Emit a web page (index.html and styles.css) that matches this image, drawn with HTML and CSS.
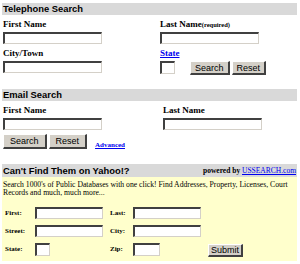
FILE: index.html
```html
<!DOCTYPE html>
<html lang="en">
<head>
    <meta charset="UTF-8">
    <title>People Search</title>
    <link rel="stylesheet" href="styles.css">
</head>
<body>

<div class="page">
    <div class="bar">Telephone Search</div>
    <div class="grid tel">
        <div class="field">
            <label>First Name</label>
            <input type="text" class="txt">
        </div>
        <div class="field">
            <label>Last Name<small>(required)</small></label>
            <input type="text" class="txt">
        </div>
        <div class="field">
            <label>City/Town</label>
            <input type="text" class="txt">
        </div>
        <div class="field">
            <a href="#" class="state">State</a>
            <div class="row">
                <input type="text" class="txt st">
                <button class="btn">Search</button>
                <button class="btn">Reset</button>
            </div>
        </div>
    </div>

    <div class="bar">Email Search</div>
    <div class="grid mail">
        <div class="field">
            <label>First Name</label>
            <input type="text" class="txt">
        </div>
        <div class="field">
            <label>Last Name</label>
            <input type="text" class="txt">
        </div>
    </div>
    <div class="row mail-btns">
        <button class="btn big">Search</button>
        <button class="btn big">Reset</button>
        <a href="#" class="adv">Advanced</a>
    </div>

    <div class="bar big-bar">
        <span>Can't Find Them on Yahoo!?</span>
        <span class="powered">powered by <a href="#">USSEARCH.com</a></span>
    </div>
    <div class="yellow">
        <p class="desc">Search 1000's of Public Databases with one click! Find Addresses, Property, Licenses, Court Records and much, much more...</p>
        <div class="us-form">
            <label>First:</label>
            <input type="text" class="txt w68">
            <label>Last:</label>
            <input type="text" class="txt w68">
            <span></span>

            <label>Street:</label>
            <input type="text" class="txt w68">
            <label>City:</label>
            <input type="text" class="txt w68">
            <span></span>

            <label>State:</label>
            <input type="text" class="txt w14">
            <label>Zip:</label>
            <input type="text" class="txt w26">
            <button class="btn sub">Submit</button>
        </div>
    </div>
</div>

</body>
</html>
```

FILE: styles.css
```css
body {
    margin: 0;
    font-family: "Liberation Serif", "Times New Roman", serif;
    background: #fff;
    color: #000;
}
.page {
    width: 295px;
    margin: 3px 0 0 2px;
}
.bar {
    height: 12px;
    line-height: 12px;
    background-color: #d9d9d9;
    font-family: "Liberation Sans", Arial, sans-serif;
    font-weight: bold;
    font-size: 9.4px;
    padding-left: 1px;
}
.grid {
    display: grid;
    grid-template-columns: 157px 1fr;
    padding-left: 1px;
}
.tel {
    padding-top: 4px;
    row-gap: 4px;
    margin-bottom: 14px;
}
.mail {
    padding-top: 4px;
    grid-template-columns: 160px 1fr;
}
.field label,
.field .state {
    display: block;
    font-weight: bold;
    font-size: 9px;
    line-height: 11px;
    margin-bottom: 2px;
}
.field label small {
    font-size: 6.5px;
}
.state {
    color: #0000ee;
}
.txt {
    display: block;
    box-sizing: border-box;
    width: 99px;
    height: 12px;
    padding: 0;
    margin: 0;
    background: #fff;
    border-style: solid;
    border-width: 2px 1px 1px 2px;
    border-color: #404040 #d4d0c8 #d4d0c8 #404040;
}
.row {
    display: flex;
    align-items: flex-start;
}
.st {
    width: 15px;
    height: 13px;
    margin-right: 15px;
}
.btn {
    box-sizing: border-box;
    height: 14px;
    padding: 0 4px;
    margin: 0 2px 0 0;
    background-color: #d4d0c8;
    border-style: solid;
    border-width: 1px 2px 2px 1px;
    border-color: #ffffff #404040 #404040 #ffffff;
    font-family: "Liberation Sans", Arial, sans-serif;
    font-size: 9px;
    color: #000;
}
.mail-btns {
    padding: 4px 0 0 1px;
    margin-bottom: 15px;
    align-items: center;
}
.btn.big {
    height: 15px;
    padding: 0 6px;
}
.adv {
    margin: 7px 0 0 6px;
    font-size: 7px;
    font-weight: bold;
    color: #0000ee;
}
.big-bar {
    height: 13px;
    line-height: 13px;
    display: flex;
    justify-content: space-between;
}
.powered {
    font-family: "Liberation Serif", "Times New Roman", serif;
    font-size: 7.5px;
    padding-right: 1px;
}
.powered a {
    color: #0000ee;
    font-weight: normal;
}
.yellow {
    background-color: #ffffcc;
    height: 84px;
    padding: 4px 1px 0 1px;
    box-sizing: border-box;
}
.desc {
    margin: 0;
    font-size: 7.7px;
    line-height: 8px;
}
.us-form {
    display: grid;
    grid-template-columns: 30px 75px 23px 75px auto;
    grid-auto-rows: 18px;
    align-items: start;
    margin-top: 10px;
    padding-left: 2px;
}
.us-form label {
    font-size: 7px;
    font-weight: bold;
    line-height: 12px;
}
.w68 {
    width: 68px;
}
.w14 {
    width: 15px;
    height: 13px;
}
.w26 {
    width: 27px;
    height: 13px;
}
.btn.sub {
    width: 35px;
    height: 13px;
    padding: 0;
    margin-top: 1px;
}
```
